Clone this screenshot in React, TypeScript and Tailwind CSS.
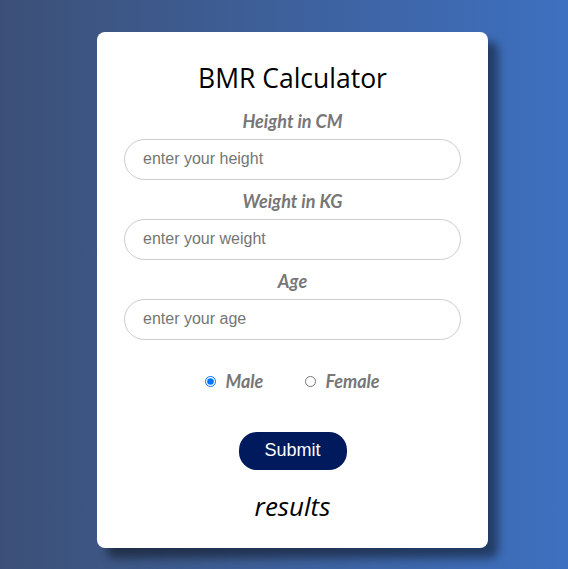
import React, { useState } from 'react';

export default function App() {
  const [gender, setGender] = useState('male');

  const label = "text-[18px] font-bold italic text-[#777] leading-none text-center font-['Lato',sans-serif]";
  const input =
    "w-full h-[41px] rounded-full border border-[#ccc] px-[18px] text-[16px] text-[#333] placeholder:text-[#757575] outline-none font-['Liberation_Sans',Arial,sans-serif]";

  return (
    <div className="min-h-[569px] w-full bg-gradient-to-r from-[#3c5077] to-[#3d70c0] flex justify-center pt-[32px] pl-[17px]">
      <div className="w-[391px] h-[516px] bg-white rounded-[8px] shadow-[10px_10px_10px_rgba(0,0,0,0.45)] px-[27px] flex flex-col items-center">
        <h1 className="mt-[33px] text-[26.5px] leading-none text-black font-['Open_Sans',sans-serif]">BMR Calculator</h1>

        <label className={`${label} mt-[20px]`}>Height in CM</label>
        <input className={`${input} mt-[9px]`} placeholder="enter your height" />

        <label className={`${label} mt-[12px]`}>Weight in KG</label>
        <input className={`${input} mt-[9px]`} placeholder="enter your weight" />

        <label className={`${label} mt-[12px]`}>Age</label>
        <input className={`${input} mt-[9px]`} placeholder="enter your age" />

        <div className="mt-[28px] flex items-center gap-[42px]">
          <label className="flex items-center gap-[9px] cursor-pointer">
            <input
              type="radio"
              name="gender"
              checked={gender === 'male'}
              onChange={() => setGender('male')}
              className="w-[11px] h-[11px] accent-[#0075ff]"
            />
            <span className="text-[18px] font-bold italic text-[#777] font-['Lato',sans-serif]">Male</span>
          </label>
          <label className="flex items-center gap-[9px] cursor-pointer">
            <input
              type="radio"
              name="gender"
              checked={gender === 'female'}
              onChange={() => setGender('female')}
              className="w-[11px] h-[11px] accent-[#0075ff]"
            />
            <span className="text-[18px] font-bold italic text-[#777] font-['Lato',sans-serif]">Female</span>
          </label>
        </div>

        <button className="mt-[37px] w-[108px] h-[38px] rounded-[18px] bg-[#001a5e] text-white text-[18px] font-['Liberation_Sans',Arial,sans-serif]">
          Submit
        </button>

        <div className="mt-[23px] text-[26px] italic text-black leading-none font-['Open_Sans',sans-serif]">results</div>
      </div>
    </div>
  );
}
